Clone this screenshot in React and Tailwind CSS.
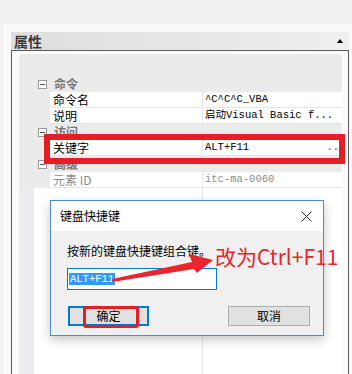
import React from "react";

const CJK = "font-['Noto_Sans_CJK_SC','Noto_Sans',sans-serif]";
const MONO = "font-['Liberation_Mono','Noto_Sans_CJK_SC',monospace]";

function Collapse() {
  return (
    <span className="flex h-[9px] w-[9px] items-center justify-center border border-[#9a9a9a] bg-white">
      <span className="h-px w-[5px] bg-[#555]" />
    </span>
  );
}

function Category({ label }) {
  return (
    <div className="flex h-[16px] items-center bg-[#ebebeb] pl-[19px]">
      <Collapse />
      <span className="ml-[7px] text-[12px] font-bold leading-none text-[#777]">
        {label}
      </span>
    </div>
  );
}

function Row({ label, value, muted, more }) {
  return (
    <div className="flex h-[16px] bg-[#ebebeb]">
      <div className="w-[31px]" />
      <div
        className={`flex w-[153px] items-center border-b border-r border-[#e6e6e6] bg-white pl-[3px] text-[12px] leading-none ${
          muted ? "text-[#8a8a8a]" : "text-black"
        }`}
      >
        {label}
      </div>
      <div
        className={`flex flex-1 items-center justify-between border-b border-[#e6e6e6] bg-white pl-[2px] pr-[3px] text-[10.5px] leading-none ${MONO} ${
          muted ? "text-[#8a8a8a]" : "text-black"
        }`}
      >
        <span className="whitespace-pre">{value}</span>
        {more && <span className="text-[#555]">..</span>}
      </div>
    </div>
  );
}

export default function App() {
  return (
    <div
      className={`relative h-[374px] w-[352px] overflow-hidden bg-[#f0f0f0] pl-[3px] pt-[24px] ${CJK}`}
    >
      <div className="h-full bg-[#f9f9f9] pl-[8px] pt-[8px]">
        <div className="w-[338px]">
          <div className="flex h-[18px] items-center justify-between bg-gradient-to-r from-[#dedede] to-[#efefef] pl-[3px] pr-[6px]">
            <span className="text-[14px] font-bold leading-none text-[#3a3a3a]">
              属性
            </span>
            <span className="h-0 w-0 border-x-[3px] border-b-[4px] border-x-transparent border-b-black" />
          </div>
          <div className="h-[324px] border-x border-t border-[#5b5b5b] bg-[#fbfbfb] pl-[7px] pr-[6px] pt-[3px]">
            <div className="flex h-full flex-col">
              <div className="h-[22px] rounded-t-[3px] bg-[#ebebeb]" />
              <Category label="命令" />
              <Row label="命令名" value="^C^C^C_VBA" />
              <Row label="说明" value={"启动Visual Basic f..."} />
              <Category label="访问" />
              <Row label="关键字" value="ALT+F11" more />
              <Category label="高级" />
              <Row label="元素 ID" value="itc-ma-0060" muted />
              <div className="flex flex-1">
                <div className="w-[15px] bg-[#ebecef]" />
                <div className="flex-1 bg-white">
                  <div className="h-full w-[169px] border-r border-[#e6e6e6]" />
                </div>
              </div>
            </div>
          </div>
        </div>
      </div>

      {/* red highlight around keyword row */}
      <div className="absolute left-[44px] top-[134px] h-[30px] w-[301px] border-[6px] border-[#e31e25]" />

      {/* dialog */}
      <div className="absolute left-[50px] top-[200px] flex h-[136px] w-[274px] flex-col border border-[#4b8ed0] bg-[#f0f0f0] shadow-[0_4px_10px_rgba(0,0,0,0.22)]">
        <div className="flex h-[30px] items-center justify-between bg-white pl-[9px] pr-[11px]">
          <span className="text-[12px] leading-none text-black">键盘快捷键</span>
          <svg width="11" height="11" viewBox="0 0 11 11">
            <path d="M0.5 0.5L10.5 10.5M10.5 0.5L0.5 10.5" stroke="#222" strokeWidth="1" />
          </svg>
        </div>
        <div className="flex flex-1 flex-col pl-[16px] pr-[13px] pt-[14px]">
          <span className="text-[12px] leading-none text-black">
            按新的键盘快捷键组合键。
          </span>
          <div className="mt-[11px] flex h-[22px] w-[150px] items-center border border-[#0078d7] bg-white pl-[1px]">
            <span className={`bg-[#3399ff] px-px text-[10.5px] leading-[12px] text-white ${MONO}`}>
              ALT+F11
            </span>
          </div>
          <div className="mt-[16px] flex justify-between">
            <div className="ml-px flex h-[20px] w-[81px] items-center justify-center border-2 border-[#0078d7] bg-[#e1e1e1] text-[12px] leading-none text-black">
              确定
            </div>
            <div className="flex h-[20px] w-[82px] items-center justify-center border border-[#adadad] bg-[#e1e1e1] text-[12px] leading-none text-black">
              取消
            </div>
          </div>
        </div>
      </div>

      {/* red box around OK button */}
      <div className="absolute left-[83px] top-[306px] h-[22px] w-[56px] rounded-[3px] border-[3px] border-[#e31e25]" />

      {/* arrow */}
      <svg className="absolute left-0 top-0" width="352" height="374" viewBox="0 0 352 374">
        <polygon
          points="112,279 192,262 189,254 213,260 197,273 194,269 112,282"
          fill="#e8262c"
        />
      </svg>

      <span className="absolute left-[215px] top-[246px] text-[21px] leading-none text-[#e5262b]">
        改为Ctrl+F11
      </span>
    </div>
  );
}
